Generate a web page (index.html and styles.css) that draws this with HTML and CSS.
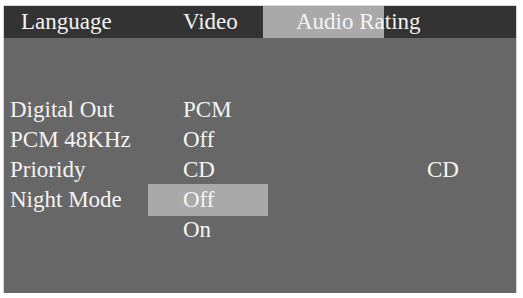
FILE: index.html
```html
<!DOCTYPE html>
<html>
<head>
<meta charset="utf-8">
<link rel="stylesheet" href="styles.css">
</head>
<body>
<div class="panel">
  <div class="tabs">
    <div class="tab tab-lang">Language</div>
    <div class="tab tab-video">Video</div>
    <div class="tab tab-audio active">Audio Rating</div>
  </div>
  <div class="menu">
    <div class="label">Digital Out</div><div class="value">PCM</div><div class="extra"></div>
    <div class="label">PCM 48KHz</div><div class="value">Off</div><div class="extra"></div>
    <div class="label">Prioridy</div><div class="value">CD</div><div class="extra">CD</div>
    <div class="label">Night Mode</div><div class="value selected">Off</div><div class="extra"></div>
    <div class="label"></div><div class="value">On</div><div class="extra"></div>
  </div>
</div>
</body>
</html>
```
FILE: styles.css
```css
html, body {
  margin: 0;
  padding: 0;
  background: #ffffff;
}
body {
  font-family: "Liberation Serif", "Times New Roman", serif;
  font-size: 23px;
  color: #f4f4f4;
}
.panel {
  margin: 6px 0 0 4px;
  width: 512px;
  height: 287px;
  background: #676767;
  box-shadow: 0 0 0 1px #d8d8d8;
}
.tabs {
  display: flex;
  height: 32px;
  background: #333333;
  line-height: 32px;
}
.tab {
  white-space: nowrap;
  box-sizing: border-box;
}
.tab-lang {
  width: 179px;
  padding-left: 17px;
}
.tab-video {
  width: 80px;
}
.tab-audio {
  width: 121px;
  padding-left: 33px;
}
.active {
  background: #a9a9a9;
}
.menu {
  display: grid;
  grid-template-columns: 138px 120px 1fr;
  grid-auto-rows: 30px;
  padding: 57px 0 0 6px;
  line-height: 30px;
}
.value {
  padding-left: 35px;
  box-sizing: border-box;
}
.selected {
  background: #a9a9a9;
  margin: -1px 0;
  line-height: 32px;
}
.extra {
  padding-left: 159px;
}
```
